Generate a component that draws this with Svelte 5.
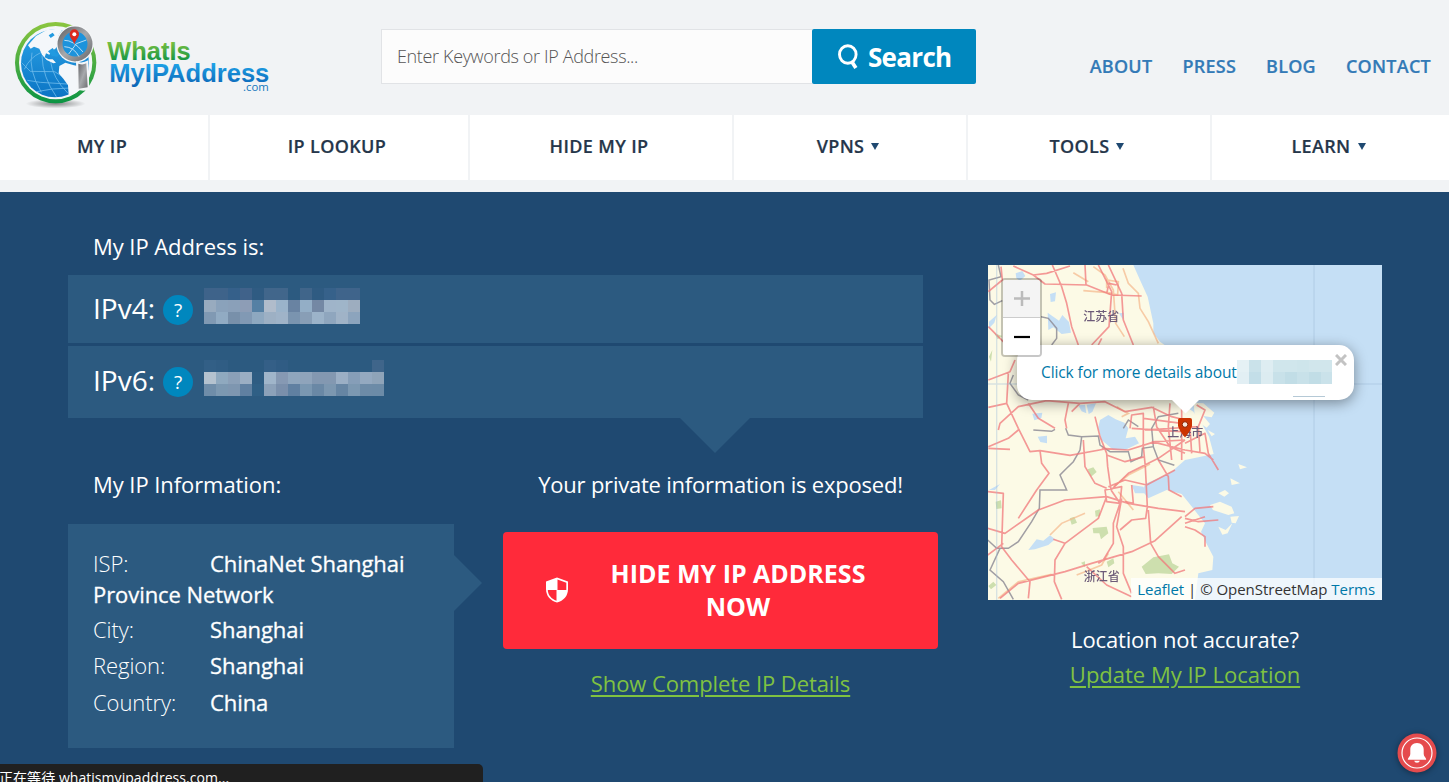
<script>
  const nav = [
    { label: 'MY IP' },
    { label: 'IP LOOKUP' },
    { label: 'HIDE MY IP' },
    { label: 'VPNS', menu: true },
    { label: 'TOOLS', menu: true },
    { label: 'LEARN', menu: true }
  ];
  const links = ['ABOUT', 'PRESS', 'BLOG', 'CONTACT'];

  const v4 = [
    ['#3e638a', '#3e638a', '#35608a', '#40628a', '#2f5b82', '#41668b', '#41668b', '#2c5a80', '#40658a', '#2f5b82', '#36618a', '#3f648b', '#3f648b'],
    ['#98abbf', '#8aa2bb', '#8aa0b9', '#8d9db6', '#5580a4', '#b0bccb', '#9ab3ca', '#6983a2', '#93aec6', '#7488a4', '#9fb4c9', '#9fb5c9', '#9dadbf'],
    ['#8099b3', '#91abc3', '#7890aa', '#8199b4', '#8ea8c0', '#9db0c4', '#9fb3c8', '#7a94af', '#889eb6', '#9cb3c9', '#8fa6be', '#a0b3c7', '#8ca4bd']
  ];
  const v6 = [
    ['#325f86', '#305d84', '#2c5a80', '#2c5a80', '#2c5a80', '#345f87', '#305c84', '#2c5a80', '#2c5a80', '#2c5a80', '#2c5a80', '#2c5a80', '#2c5a80', '#2c5a80', '#3f658a'],
    ['#b4c2cf', '#8fa9bf', '#8ba0b8', '#9baec3', '#2e5c82', '#a0b5ca', '#8699b3', '#8fa6bd', '#8fa4bb', '#8398b1', '#8398b1', '#9bafc5', '#869eb8', '#94a9c0', '#8fa4b9'],
    ['#6f8da9', '#7c98b1', '#7e96b0', '#6080a1', '#2f5f85', '#8ca1b9', '#7a8fab', '#6080a1', '#7a97b1', '#6a88a5', '#7c97b0', '#6685a3', '#7c98b1', '#6d8ba7', '#6c8ba7']
  ];
  const pop = [
    ['#e5f1f5', '#cae2ea', '#deedf2', '#d0e6ec', '#d0e6ec', '#cee5eb', '#d1e6ec', '#d1e6ec'],
    ['#e2eff4', '#c3dee8', '#dcecf1', '#c8e1e9', '#c1dde6', '#c8e1e9', '#c1dde6', '#cae2ea']
  ];
  const info = [
    ['ISP:', 'ChinaNet Shanghai Province Network'],
    ['City:', 'Shanghai'],
    ['Region:', 'Shanghai'],
    ['Country:', 'China']
  ];
</script>

{#snippet mosaic(rows)}
  <svg class="mosaic" width={rows[0].length * 12} height={rows.length * 12} shape-rendering="crispEdges">
    {#each rows as row, y}
      {#each row as c, x}
        <rect x={x * 12} y={y * 12} width="12" height="12" fill={c} />
      {/each}
    {/each}
  </svg>
{/snippet}

<div class="page">
  <header>
    <svg class="logo" width="270" height="105" viewBox="0 0 810 315">
      <defs>
        <linearGradient id="ring" x1="0" y1="0" x2="0" y2="1"><stop offset="0" stop-color="#8cc63f" /><stop offset="1" stop-color="#0b9444" /></linearGradient>
        <linearGradient id="sea" x1="0" y1="0" x2="0" y2="1"><stop offset="0" stop-color="#2ba3e6" /><stop offset="1" stop-color="#0b74c4" /></linearGradient>
        <linearGradient id="steel" x1="0" y1="0" x2="1" y2="1"><stop offset="0" stop-color="#66676b" /><stop offset=".5" stop-color="#a7a9ac" /><stop offset="1" stop-color="#6d6e71" /></linearGradient>
        <linearGradient id="gt" gradientUnits="userSpaceOnUse" x1="0" y1="90" x2="0" y2="152"><stop offset="0" stop-color="#86c540" /><stop offset="1" stop-color="#149546" /></linearGradient>
        <linearGradient id="bt" gradientUnits="userSpaceOnUse" x1="0" y1="160" x2="0" y2="228"><stop offset="0" stop-color="#1fa3e8" /><stop offset="1" stop-color="#0b65b6" /></linearGradient>
        <radialGradient id="sh"><stop offset="0" stop-color="#000" stop-opacity=".45" /><stop offset="1" stop-color="#000" stop-opacity="0" /></radialGradient>
      </defs>
      <ellipse cx="167" cy="281" rx="90" ry="14" fill="url(#sh)" />
      <circle cx="167" cy="158" r="122" fill="url(#ring)" />
      <circle cx="167" cy="158" r="110" fill="#f4f6f8" />
      <circle cx="165" cy="160" r="102" fill="url(#sea)" />
      <path d="M73 178Q90 142 122 128M65 158 91 184 164 185 202 209M82 211 121 217 201 222M110 245 157 237 209 234M96 128Q84 178 124 247M126 137Q128 202 169 260M151 151Q158 205 204 250" fill="none" stroke="#6cb9ea" stroke-width="2.500" />
      <g fill="#f4f7fa">
        <path d="M84 106 108 78 140 60 190 54 176 76 174 106 166 116 156 122 148 134 138 130 134 142 146 148 158 148 168 158 160 160 140 150 126 134 118 116 102 110 92 116Z" />
        <path d="M178 168 196 158 222 166 262 174 264 200 244 236 222 252 206 254 204 226 190 206 176 190Z" />
      </g>
      <path d="M146 76 158 68 164 76 152 84ZM144 124 158 114 168 128 178 132 172 140 156 138Z" fill="#219ae0" />
      <circle cx="225" cy="102" r="56" fill="#f4f6f8" />
      <circle cx="225" cy="102" r="45" fill="#1c93dc" stroke="url(#steel)" stroke-width="15" />
      <path d="M193 91Q220 90 249 126M193 110Q222 111 237 140M206 132 229 101 259 90" fill="none" stroke="#b8def5" stroke-width="3" />
      <path d="M223 103C218 88 208 83 209 72A14 14 0 0 1 237 72C237 83 227 89 223 103Z" fill="#dc2a20" />
      <circle cx="223" cy="73" r="6" fill="#fff" />
      <path d="M228 154Q246 162 265 151L268 239 250 242 230 239Z" fill="#f4f6f8" />
      <path d="M235 161Q248 166 259 160L263 232 236 236Z" fill="url(#steel)" />
      <text x="322" y="150" font-size="78" textLength="250" lengthAdjust="spacingAndGlyphs" fill="url(#gt)" font-weight="700">WhatIs</text>
      <text x="328" y="215" font-size="77" textLength="480" lengthAdjust="spacingAndGlyphs" fill="url(#bt)" font-weight="700">MyIPAddress</text>
      <text class="com" x="729" y="244" font-size="33" textLength="77" lengthAdjust="spacingAndGlyphs" fill="#1478bd">.com</text>
    </svg>
    <form class="search">
      <div class="field">Enter Keywords or IP Address...</div>
      <div class="go">
        <svg width="22" height="25" viewBox="0 0 22 25" fill="none" stroke="#fff"><ellipse cx="10.800" cy="10.500" rx="8.300" ry="8.800" stroke-width="2.900" /><path d="M15 18 18.900 24" stroke-width="3.700" /></svg>
        <span>Search</span>
      </div>
    </form>
    <div class="links">
      {#each links as l}<a href="#top">{l}</a>{/each}
    </div>
  </header>

  <nav>
    {#each nav as n}
      <div class="tab"><span>{n.label}</span>{#if n.menu}<svg width="8" height="7" viewBox="0 0 8 7"><path d="M0 0H8L4 7Z" fill="#1f4971" /></svg>{/if}</div>
    {/each}
  </nav>

  <main>
    <section class="left">
      <h2 class="addr">My IP Address is:</h2>
      <div class="ips">
        <div class="row v4"><span class="name">IPv4:</span><span class="q">?</span>{@render mosaic(v4)}</div>
        <div class="row v6"><span class="name">IPv6:</span><span class="q">?</span>{@render mosaic(v6)}</div>
        <svg class="down" width="70" height="35"><path d="M0 0H70L35 35Z" fill="#2c5a80" /></svg>
      </div>
      <div class="cols">
        <div class="infocol">
          <h2>My IP Information:</h2>
          <div class="card">
            {#each info as [k, v]}
              <p><span class="k">{k}</span><span class="v">{v}</span></p>
            {/each}
            <svg class="side" width="28" height="56"><path d="M0 0 28 28 0 56Z" fill="#2c5a80" /></svg>
          </div>
        </div>
        <div class="cta">
          <h2 class="exposed">Your private information is exposed!</h2>
          <div class="hide">
            <svg width="24" height="26" viewBox="0 0 24 26"><path d="M12 .5 23 4.400V12C23 19 18.500 23.700 12 25.600 5.500 23.700 1 19 1 12V4.400Z" fill="#fff" /><path d="M12.500 2.600 21.300 5.700V13H12.500ZM11.500 13V23.800C6.600 22 2.800 18 2.800 13Z" fill="#ff2a3a" /></svg>
            <span>HIDE MY IP ADDRESS<br />NOW</span>
          </div>
          <a class="green show" href="#details">Show Complete IP Details</a>
        </div>
      </div>
    </section>

    <aside>
      <div class="map">
        <svg class="tiles" width="394" height="335" viewBox="9 15 1182 1005">
          <rect x="9" y="15" width="1182" height="1005" fill="#fcfae6" />
          <path d="M445 15 465 60 488 110 505 190 505 220 525 245 560 270 600 330 610 400 580 425 625 455 650 490 672 530 686 582 640 592 600 600 560 635 530 650 485 670 470 690 490 715 545 690 590 702 622 742 640 765 660 790 648 815 664 850 685 890 682 930 640 940 630 1020H1191V15Z" fill="#c5dff5" />
          <g fill="#c5dff5">
            <path d="M340 502 345 480 370 465 392 478 418 488 430 505 422 535 450 530 462 550 420 570 385 570 350 540ZM92 40 112 33 121 48 105 62 94 55ZM188 158 205 170 222 182 232 165 252 186 258 218 230 222 205 202 190 210ZM195 102 213 97 210 124 197 126ZM280 436 300 434 304 460 290 454ZM305 434 333 430 322 456 311 462ZM142 461 172 458 169 474 148 481ZM158 530 186 527 186 550 166 546ZM130 870 155 838 175 842 195 826 210 838 190 855 150 868ZM12 185 35 165 28 188 12 205ZM440 675 475 680 480 700 450 700ZM402 160 417 158 414 179ZM12 690 45 672 30 690Z" />
          </g>
          <g fill="#fcfae6">
            <path d="M626 428 655 430 688 458 680 472 655 468 675 492 665 503 645 490 630 480ZM675 735 705 725 740 740 748 760 730 765 700 755 684 750ZM736 770 762 768 752 790 740 788ZM700 800 722 810 742 790 728 820 712 824ZM700 700 720 690 732 700 718 710ZM736 655 765 670 740 675ZM760 612 786 622 765 628ZM668 510 690 522 680 529Z" />
          </g>
          <path d="M28 220 52 228 38 238ZM470 920 505 892 552 883 562 910 582 920 560 942 520 940 482 942ZM308 628 325 622 335 636 318 650ZM323 804 365 800 370 820 348 838 343 820 325 820ZM254 775 268 770 276 788 260 794ZM32 725 48 721 50 745 34 747ZM365 905 385 895 388 910 370 922ZM288 908 300 904 300 922ZM10 978 25 965 34 975 18 988ZM330 752 345 748 345 768 332 770ZM12 290 22 270 18 305Z" fill="#cddfae" />
          <g fill="none" stroke="#f5b68a" stroke-width="5" opacity=".7">
            <path d="M325 20 360 45 385 90 392 190 418 230M414 25 430 70 460 100 465 145 490 185 520 250M265 38 310 65M295 92 370 98 400 105M195 825 230 790 300 760M386 680 430 645 495 612M400 695 445 750M365 85 365 60 400 65 398 105 368 100M395 440 430 460 410 470M275 945 300 935 350 915 370 880M40 1015 100 965 200 943" />
          </g>
          <g fill="none" stroke="#8f8d96" stroke-width="4.500" opacity=".85">
            <path d="M40 15 48 50 12 60 15 120 28 133 52 122M168 170 190 175 215 205 215 235 200 255M85 345 75 370 100 405 130 420M145 510 200 514 210 508M242 505 250 525 290 530 340 528 345 555 375 575 430 575 438 605 470 590 472 565 505 560 500 505 520 470 580 460M290 530 285 570 265 605 245 625 225 645 245 690 165 690 163 745 140 785 100 845 70 865 35 865 8 840M45 865 15 930 55 965 85 1018M505 560 520 600 568 616M415 505 430 480 460 500" />
          </g>
          <g fill="none" stroke="#f0797b" stroke-width="5" stroke-linejoin="round" opacity=".76">
            <path d="M85 18 145 45 185 40 255 18M145 45 180 72 305 75 380 105 470 108M202 15 230 80 245 130 260 200 280 255M300 15 303 75M340 15 380 95 372 200 320 255M370 15 410 100 415 180 445 255M48 20 52 60 10 95M10 200 45 235 90 280M10 360 75 335 90 300M70 340 65 430 10 442M65 430 100 505 135 575 165 572 255 586 360 567 430 570 510 545 600 540M40 510 45 490 100 440 185 422 285 430 360 425 420 455 500 442 560 470 600 480M130 430 160 475 210 505M250 430 240 480 245 505M285 430 260 455M330 470 345 530 365 580 368 620 378 690M295 540 300 620 330 670 365 685M350 565 430 570M165 572 170 610 192 640 155 690 100 775M10 565 75 568M10 560 70 535 100 510M8 695 55 700 50 860 80 900 135 965 130 1015M8 805 60 820 160 750 240 720 365 710 430 730 520 745 600 755M365 710 340 775 240 850 205 838M240 850 210 900 208 965 230 1018M378 690 405 730 385 790 385 850 355 900 340 910M410 715 395 800 415 860 415 940 440 1000M405 810 440 780 482 775 487 740 481 620 475 560M8 885 55 850M45 1015 100 970 240 935 320 910 440 875 510 842 590 770M490 750 497 850 520 890 570 940 600 930M378 690 430 640 520 595 600 540M370 680 420 660 485 675 570 630M360 690 410 680 405 730 365 725ZM305 920 365 975 440 1010M520 600 550 650 552 690 590 710M440 675 445 730 420 725M435 505 440 465 475 460 475 570M475 475 590 490M505 440 515 500 555 560 600 580M555 430 550 500 560 600M590 430 590 600M480 510 640 500M440 505 590 515M500 545 600 570 660 580 685 600M635 435 660 450 640 500 645 575M615 500 620 580M600 550 660 520 670 580 700 630M600 770 630 745 685 740M600 775 640 785 700 780M600 800 630 810 660 830 660 860M600 790 660 770M365 585 420 605 480 590M350 235 340 255M365 100 372 70 395 75" />
          </g>
          <path d="M35 15V1020M987 15V1020M9 372H1191" fill="none" stroke="#9fbfd9" stroke-width="4" opacity=".4" />
          <g fill="#6c5a78" font-size="36" font-weight="500" class="place">
            <text x="295" y="182">江苏省</text>
            <text x="296" y="963">浙江省</text>
            <text x="547" y="532">上海市</text>
          </g>
        </svg>
        <div class="popup">
          <span>Click for more details about</span>
          {@render mosaic(pop)}
          <svg class="x" width="12" height="12"><path d="M1 1 11 11M11 1 1 11" stroke="#c3c3c3" stroke-width="3" /></svg>
          <i class="line"></i>
        </div>
        <svg class="tip" width="30" height="16"><path d="M0 0H29L14.500 14.500Z" fill="#fff" /></svg>
        <svg class="pin" width="14" height="20"><path d="M2 0H12Q14 0 14 2V8Q13 12 7 19.500Q1 12 0 8V2Q0 0 2 0Z" fill="#cc3300" /><circle cx="7" cy="6.500" r="2.800" fill="#f5e7dd" stroke="#902400" /></svg>
        <div class="zoom">
          <div class="in"><svg width="16" height="16"><path d="M8 0V15M0 7.500H16" stroke="#bbb" stroke-width="2.500" /></svg></div>
          <div class="out"><svg width="16" height="4"><path d="M0 2H16" stroke="#000" stroke-width="2.200" /></svg></div>
        </div>
        <div class="attr"><a href="#leaflet">Leaflet</a> | © OpenStreetMap <a href="#terms">Terms</a></div>
      </div>
      <p class="acc">Location not accurate?</p>
      <a class="green upd" href="#update">Update My IP Location</a>
    </aside>
  </main>

  <div class="status">正在等待 whatismyipaddress.com...</div>
  <svg class="bell" width="40" height="40" viewBox="0 0 40 40"><circle cx="20" cy="20" r="19.500" fill="#e54b4d" /><circle cx="20" cy="20" r="15" fill="none" stroke="#fff" stroke-width="1.200" /><path d="M20 10C24.500 10 26.700 13 26.700 16.500V21C26.700 23.500 29.200 24.500 29.200 26.800H10.800C10.800 24.500 13.300 23.500 13.300 21V16.500C13.300 13 15.500 10 20 10ZM17.200 27.800H22.800Q22.500 29.800 20 29.800T17.200 27.800Z" fill="#fff" /></svg>
</div>

<style>
  :global(body) { background: #1f4971; overflow: hidden; }
  .page { position: relative; width: 1449px; height: 782px; overflow: hidden; background: #1f4971; font-family: "Open Sans", "Noto Sans CJK SC", sans-serif; color: #fff; }
  a { text-decoration: none; }
  header { display: flex; height: 115px; background: #f1f3f5; }
  .logo { margin-top: 10px; flex: none; font-family: "Liberation Sans", Arial, sans-serif; }
  .com { font-family: "Open Sans", sans-serif; }
  .search { display: flex; margin: 29px 0 0 111px; height: 55px; width: 595px; flex: none; }
  .field { box-sizing: border-box; width: 431px; border: 1px solid #e1e3e6; border-right: 0; background: #fcfcfc; padding-left: 15px; font-size: 18px; line-height: 53px; font-weight: 300; letter-spacing: -.35px; color: #555; white-space: nowrap; }
  .go { flex: 1; background: #0087be; border-radius: 2px; display: flex; align-items: center; padding-left: 25px; gap: 9px; font-size: 26px; font-weight: 700; letter-spacing: -.7px; }
  .links { flex: 1; display: flex; justify-content: flex-end; gap: 30px; padding: 54px 18px 0 0; font-size: 18px; line-height: 25px; font-weight: 600; letter-spacing: .25px; }
  .links a { color: #337ab7; -webkit-text-stroke: .2px #337ab7; }
  nav { display: grid; grid-template-columns: 208px 258px 262px 232px 242px 237px; gap: 2px; background: #f1f3f5; height: 65px; padding-bottom: 12px; }
  .tab { background: #fff; display: flex; align-items: center; justify-content: center; gap: 7px; font-size: 18px; font-weight: 600; letter-spacing: .35px; color: #25364a; -webkit-text-stroke: .2px #25364a; padding: 0 4px 3px 0; }
  main { display: flex; gap: 50px; padding-left: 68px; }
  .left { width: 870px; }
  h2 { margin: 0; font-size: 22px; font-weight: 400; line-height: 30px; letter-spacing: -.07px; white-space: nowrap; }
  .exposed { letter-spacing: -.22px; }
  .addr { padding: 39px 0 14px 25px; }
  .ips { position: relative; width: 855px; display: flex; flex-direction: column; gap: 3px; }
  .row { display: flex; background: #2c5a80; padding-left: 25px; }
  .v4 { height: 68px; }
  .v6 { height: 72px; }
  .name { width: 70px; font-size: 28px; line-height: 68px; }
  .v4 .name { line-height: 67px; }
  .q { width: 30px; height: 30px; border-radius: 50%; background: #0087be; font-size: 19px; line-height: 30px; text-align: center; margin-top: 20px; }
  .v6 .q { margin-top: 21px; }
  .mosaic { display: block; flex: none; }
  .v4 .mosaic { margin: 13px 0 0 11px; }
  .v6 .mosaic { margin: 14px 0 0 11px; }
  .down { position: absolute; left: 612px; top: 143px; }
  .cols { display: flex; gap: 49px; padding-top: 51px; }
  .infocol { width: 386px; }
  .infocol h2 { padding-left: 25px; }
  .card { position: relative; box-sizing: border-box; height: 224px; margin-top: 25px; background: #2c5a80; padding: 24px 25px; font-size: 22px; letter-spacing: -.07px; }
  .card p { margin: 0 0 5.500px; line-height: 31px; }
  .card p:first-child { margin-bottom: 3.500px; }
  .k { display: inline-block; width: 117px; font-weight: 300; }
  .v { font-weight: 400; -webkit-text-stroke: .3px #fff; }
  .side { position: absolute; left: 386px; top: 31px; }
  .cta { width: 435px; display: flex; flex-direction: column; align-items: center; }
  .hide { box-sizing: border-box; width: 435px; height: 117px; margin: 33px 0 19px; background: #ff2a3a; border-radius: 4px; display: flex; align-items: center; padding: 0 71px 2px 42px; font-size: 25px; line-height: 33px; font-weight: 700; }
  .hide span { flex: 1; text-align: center; padding-left: 40px; white-space: nowrap; }
  .green { color: #7fc241; text-decoration: underline; text-decoration-thickness: 2px; text-underline-offset: 3px; font-size: 22px; line-height: 30px; }
  .show { letter-spacing: -.08px; }
  aside { width: 394px; padding-top: 73px; display: flex; flex-direction: column; align-items: center; }
  .map { position: relative; width: 394px; height: 335px; overflow: hidden; }
  .tiles { display: block; filter: blur(.35px); }
  .place { font-family: "Noto Sans CJK SC", sans-serif; }
  .popup { position: absolute; left: 29px; top: 80px; width: 337px; height: 55px; background: #fff; border-radius: 15px; box-shadow: 0 3px 14px rgba(0, 0, 0, .4); font-size: 15.500px; letter-spacing: -.11px; line-height: 55px; color: #0078a8; padding-left: 24px; box-sizing: border-box; white-space: nowrap; }
  .popup .mosaic { position: absolute; left: 220px; top: 15px; width: 95px; }
  .x { position: absolute; left: 318px; top: 9px; }
  .line { position: absolute; left: 276px; top: 51px; width: 32px; height: 1px; background: #b5c9d6; }
  .tip { position: absolute; left: 183px; top: 134px; }
  .pin { position: absolute; left: 190px; top: 153px; }
  .zoom { position: absolute; left: 13px; top: 13px; border: 2px solid rgba(0, 0, 0, .22); border-radius: 4px; background-clip: padding-box; }
  .zoom div { width: 37px; height: 37px; display: flex; align-items: center; justify-content: center; background: #fff; border-radius: 0 0 2px 2px; }
  .zoom .in { background: #f4f4f4; border-bottom: 1px solid #ccc; border-radius: 2px 2px 0 0; }
  .attr { position: absolute; right: 0; bottom: 0; height: 22px; padding: 0 7px 0 6px; background: rgba(255, 255, 255, .7); font-size: 15px; letter-spacing: -.03px; line-height: 22px; color: #333; white-space: nowrap; }
  .attr a { color: #0078a8; }
  .acc { margin: 24px 0 5px; font-size: 22px; letter-spacing: -.16px; line-height: 30px; }
  .status { position: absolute; left: 0; top: 764px; width: 483px; height: 30px; background: #202020; border-radius: 0 5px 0 0; font-size: 14px; letter-spacing: .05px; line-height: 27px; text-indent: -1px; }
  .bell { position: absolute; left: 1397px; top: 733px; filter: drop-shadow(0 1px 3px rgba(0, 0, 0, .4)); }
</style>
